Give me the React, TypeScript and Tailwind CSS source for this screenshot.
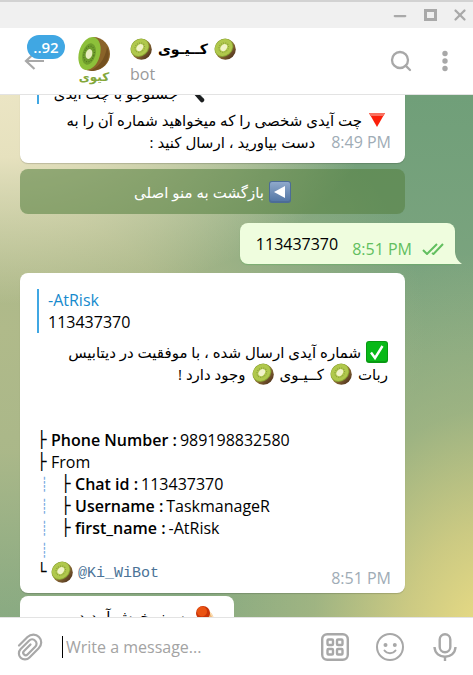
import React from "react";
import { Minus, Search, X } from "lucide-react";

const LATIN = "font-['Open_Sans','DejaVu_Sans',sans-serif]";

function Kiwi({ className = "" }: { className?: string }) {
  return (
    <svg viewBox="0 0 22 22" className={`inline-block w-[22px] h-[22px] shrink-0 ${className}`} aria-hidden="true">
      <defs>
        <linearGradient id="kiwiSkin" x1="0" y1="0" x2="1" y2="1">
          <stop offset="0.45" stopColor="#9a7a3c" />
          <stop offset="1" stopColor="#3d2014" />
        </linearGradient>
      </defs>
      <circle cx="11.4" cy="11.4" r="10.4" fill="url(#kiwiSkin)" />
      <ellipse cx="9.9" cy="9.7" rx="10" ry="8.6" transform="rotate(-42 9.9 9.7)" fill="#87a032" />
      <ellipse cx="9.7" cy="9.5" rx="9.3" ry="7.9" transform="rotate(-42 9.7 9.5)" fill="#b0c84c" />
      <ellipse cx="9.8" cy="9.6" rx="5.2" ry="4.3" transform="rotate(-42 9.8 9.6)" fill="none" stroke="#84993a" strokeWidth="1" strokeDasharray="1 1.2" />
      <ellipse cx="9.8" cy="9.6" rx="3.9" ry="2.9" transform="rotate(-50 9.8 9.6)" fill="#f1f3c8" />
    </svg>
  );
}

function CheckEmoji() {
  return (
    <svg viewBox="0 0 22 22" className="inline-block w-[22px] h-[22px] shrink-0" aria-hidden="true">
      <rect width="22" height="22" rx="3" fill="#079a12" />
      <rect x="1" y="1" width="20" height="19" rx="2" fill="#08b918" />
      <path d="M5 11.5 L9 17 L16.5 5" fill="none" stroke="#fff" strokeWidth="2.4" />
    </svg>
  );
}

function BackEmoji() {
  return (
    <svg viewBox="0 0 22 22" className="inline-block w-[22px] h-[22px] shrink-0" aria-hidden="true">
      <defs>
        <linearGradient id="backKey" x1="0" y1="0" x2="0" y2="1">
          <stop offset="0" stopColor="#8fa9cb" />
          <stop offset="1" stopColor="#5578a6" />
        </linearGradient>
      </defs>
      <rect width="22" height="22" rx="3" fill="#4c6c97" />
      <rect x="1" y="1" width="20" height="19" rx="2" fill="url(#backKey)" />
      <path d="M5 11 L16 5 V17 Z" fill="#fff" />
    </svg>
  );
}

function TriangleEmoji() {
  return (
    <svg viewBox="0 0 22 22" className="inline-block w-[22px] h-[22px] shrink-0" aria-hidden="true">
      <path d="M3 4 H19 L11 18 Z" fill="#fb1f0a" />
      <path d="M3 4 H19 L17.5 7 H4.5 Z" fill="#f9705f" />
    </svg>
  );
}

function BallEmoji() {
  return (
    <svg viewBox="0 0 22 22" className="inline-block w-[22px] h-[22px] shrink-0" aria-hidden="true">
      <path d="M12 4 L17 9 L22 20 L10 15 Z" fill="#f0b878" />
      <path d="M15 7 L22 20 M13 11 L19 19" stroke="#fbe0ba" strokeWidth="1.2" />
      <circle cx="8" cy="8" r="7" fill="#c93408" />
      <circle cx="7" cy="6.5" r="5" fill="#ea5312" />
    </svg>
  );
}

function PenEmoji() {
  return (
    <svg viewBox="0 0 22 22" className="inline-block w-[22px] h-[22px] shrink-0" aria-hidden="true">
      <path d="M9 10 L16 18" stroke="#1c1f20" strokeWidth="4.5" strokeLinecap="round" />
      <path d="M9 8 L17 16" stroke="#6b7476" strokeWidth="1" />
    </svg>
  );
}

function Avatar() {
  return (
    <div className="w-10 pb-1 flex flex-col items-center">
      <svg viewBox="0 0 34 36" className="w-[34px] h-9" aria-hidden="true">
        <path d="M16 1 C26 1 33 9 33 18 C33 27 26 34 16 35 C11 35 8 34 6 32 Z" fill="#8a6329" />
        <path d="M30 11 C33 17 32 25 27 30 C23 34 17 35 12 35 C21 32 28 24 30 11 Z" fill="#74501f" />
        <ellipse cx="12.5" cy="17.5" rx="10.5" ry="17" transform="rotate(16 12.5 17.5)" fill="#8dc03a" />
        <ellipse cx="12" cy="18" rx="6.5" ry="11" transform="rotate(16 12 18)" fill="#6f9d2c" />
        <ellipse cx="12" cy="18" rx="5" ry="8" transform="rotate(16 12 18)" fill="none" stroke="#4d6f1e" strokeWidth="1" strokeDasharray="1 1.5" />
        <ellipse cx="12" cy="18" rx="3.2" ry="5" transform="rotate(16 12 18)" fill="#e8ecc0" />
      </svg>
      <span className="text-xs leading-[10px] font-bold text-[#83a73a]">کیوی</span>
    </div>
  );
}

function Time({ children }: { children: React.ReactNode }) {
  return <time className="-mr-[3px] text-base leading-[22px] text-[#a0acb6] whitespace-nowrap">{children}</time>;
}

function Fa({ children }: { children: React.ReactNode }) {
  return <span dir="rtl" className="text-[15px]">{children}</span>;
}

function Branch({ children }: { children: string }) {
  return <span className="w-[14px] shrink-0 font-['DejaVu_Sans_Mono',monospace] text-base leading-[22px]">{children}</span>;
}

interface Row {
  label?: string;
  value?: string;
  depth: number;
  branch?: boolean;
}

const rows: Row[] = [
  { label: "Phone Number :", value: "989198832580", depth: 0, branch: true },
  { value: "From", depth: 0, branch: true },
  { label: "Chat id :", value: "113437370", depth: 1, branch: true },
  { label: "Username :", value: "TaskmanageR", depth: 1, branch: true },
  { label: "first_name :", value: "-AtRisk", depth: 1, branch: true },
  { depth: 1 },
];

function TreeRow({ row }: { row: Row }) {
  return (
    <div className="flex h-[22px] whitespace-pre">
      {row.depth > 0 && (
        <span className="w-6 pl-[3px] shrink-0 text-[#6fa4e0] font-['DejaVu_Sans_Mono',monospace] text-sm leading-[22px]">┊</span>
      )}
      {row.branch && <Branch>├</Branch>}
      {row.label && <b className="font-semibold mr-[3px]">{row.label}</b>}
      <span>{row.value}</span>
    </div>
  );
}

function TitleBar() {
  return (
    <div className="h-7 shrink-0 bg-[#f0f0f0] border-t-2 border-[#d2d2d2] flex items-center justify-end gap-3 pr-1 text-[#a9a9a9]">
      <button aria-label="Minimize" className="w-[18px] h-5 flex items-end justify-center">
        <Minus className="w-[18px] h-[18px]" strokeWidth={3} />
      </button>
      <button aria-label="Maximize" className="w-[18px] h-5 flex items-center justify-center">
        <span className="w-[13px] h-3 border-[3px] border-[#a9a9a9]" />
      </button>
      <button aria-label="Close" className="w-[18px] h-5 flex items-center justify-center">
        <X className="w-[18px] h-[18px]" strokeWidth={3} />
      </button>
    </div>
  );
}

function Header() {
  return (
    <header className="h-[67px] shrink-0 bg-white border-b border-[#e3e3e3] flex items-center pl-6 pr-[18px]">
      <button aria-label="Back" className="relative w-[41px] h-12 shrink-0 text-[#a8a8a8]">
        <svg viewBox="0 0 20 18" className="absolute left-0 top-[15px] w-5 h-[18px]" fill="none" stroke="currentColor" strokeWidth="2.2">
          <path d="M20 9 H2 M10.5 1 L2 9 L10.5 17" />
        </svg>
        <span className="absolute left-[3px] -top-[2px] h-6 w-[38px] rounded-full bg-[#40a7e3] text-white text-[15px] leading-6 font-semibold text-center">
          ..92
        </span>
      </button>
      <div className="ml-[9px] shrink-0">
        <Avatar />
      </div>
      <div className="ml-4 flex-1 min-w-0">
        <h1 dir="rtl" className="flex justify-end items-center gap-[6px] h-[26px] text-sm font-bold text-black">
          <Kiwi />
          <span>کــیـوی</span>
          <Kiwi />
        </h1>
        <p className="text-base leading-6 text-[#999]">bot</p>
      </div>
      <button aria-label="Search" className="text-[#a8a8a8]">
        <Search className="w-6 h-6" strokeWidth={2.3} />
      </button>
      <button aria-label="More" className="ml-[22px] w-5 h-6 flex items-center justify-center text-[#a8a8a8]">
        <svg viewBox="0 0 6 22" className="w-[6px] h-[22px]" fill="currentColor">
          <circle cx="3" cy="3.5" r="2.7" />
          <circle cx="3" cy="11" r="2.7" />
          <circle cx="3" cy="18.5" r="2.7" />
        </svg>
      </button>
    </header>
  );
}

function Composer() {
  return (
    <footer className="h-[58px] shrink-0 bg-white border-t border-[#e3e3e3] flex items-center pl-4 pr-[14px] text-[#a8a8a8]">
      <button aria-label="Attach" className="shrink-0">
        <svg viewBox="0 0 28 28" className="w-7 h-7" fill="none" stroke="currentColor" strokeWidth="2.2" strokeLinecap="round">
          <path d="M3 12.5 L11.5 4 C15 .7 20 .8 23 4 C26 7 26 12 22.7 15.3 L13.5 24.5 C11 27 7 27 4.7 24.7 C2.3 22.3 2.3 18.5 4.7 16 L13 7.7 C14.8 6 17.5 6 19.2 7.7 C21 9.4 21 12 19.2 13.8 L11.5 21.5 C10.5 22.5 9 22.5 8 21.5 C7 20.5 7 19 8 18 L14.5 11.5" />
        </svg>
      </button>
      <div className="ml-[18px] h-[22px] w-px shrink-0 bg-black" />
      <input
        aria-label="Write a message"
        placeholder="Write a message..."
        className="ml-[3px] flex-1 min-w-0 h-8 bg-transparent outline-none text-base text-black placeholder:text-[#a3a3a3]"
      />
      <div className="flex items-center gap-[27px]">
        <button aria-label="Bot keyboard">
          <svg viewBox="0 0 28 28" className="w-7 h-7" fill="none" stroke="currentColor" strokeWidth="2.4">
            <rect x="1.2" y="1.2" width="25.6" height="25.6" rx="5" />
            <rect x="6.5" y="6.5" width="5.5" height="5.5" rx="1" />
            <rect x="16" y="6.5" width="5.5" height="5.5" rx="1" />
            <rect x="6.5" y="16" width="5.5" height="5.5" rx="1" />
            <rect x="16" y="16" width="5.5" height="5.5" rx="1" />
          </svg>
        </button>
        <button aria-label="Emoji">
          <svg viewBox="0 0 28 28" className="w-7 h-7" fill="none" stroke="currentColor" strokeWidth="2">
            <circle cx="14" cy="14" r="13" />
            <circle cx="9.5" cy="12" r="2" fill="currentColor" stroke="none" />
            <circle cx="18.8" cy="12" r="2" fill="currentColor" stroke="none" />
            <path d="M8.5 17.5 C11 21 17 21 19.5 17.5" strokeLinecap="round" />
          </svg>
        </button>
        <button aria-label="Record voice">
          <svg viewBox="0 0 28 28" className="w-7 h-7" fill="none" stroke="currentColor" strokeWidth="2.4">
            <rect x="8.7" y="1.2" width="10.6" height="18" rx="5.3" />
            <path d="M3.5 14 C4 27 24 27 24.5 14 M14 24 V28.5" />
          </svg>
        </button>
      </div>
    </footer>
  );
}

export default function App() {
  return (
    <div className={`h-screen flex flex-col overflow-hidden text-base leading-[22px] text-black ${LATIN}`}>
      <TitleBar />
      <Header />
      <main className="flex-1 min-h-0 overflow-hidden bg-[radial-gradient(ellipse_65%_75%_at_105%_105%,#efdf84_0%,#ddd283cc_30%,#c5c58466_60%,#c5c58400_100%),radial-gradient(ellipse_80%_40%_at_0%_0%,#ebe5c4_0%,#e6e1be_30%,#e6e1be00_100%),radial-gradient(ellipse_90%_58%_at_0%_45%,#b0ba8a_0%,#b0ba8ae0_40%,#b0ba8a00_100%),linear-gradient(180deg,#709f79_0%,#80a681_50%,#86a981_100%)]">
        <div className="-mt-[13px] flex flex-col">
          <article className="ml-5 mr-[68px] bg-white rounded-b-lg px-[17px] pb-[10px] shadow-[0_1px_1px_#0000002a]">
            <div dir="rtl" className="flex items-center gap-2 h-[22px] border-l-2 border-[#40a7e3] pl-[9px] pr-[180px] whitespace-nowrap">
              <PenEmoji />
              <Fa>جستوجو با چت آیدی</Fa>
            </div>
            <div dir="rtl" className="mt-[5px] flex items-center gap-1 h-[22px] whitespace-nowrap">
              <TriangleEmoji />
              <Fa>چت آیدی شخصی را که میخواهید شماره آن را به</Fa>
            </div>
            <div className="flex items-end justify-end gap-4 h-[22px] whitespace-nowrap">
              <Fa>دست بیاورید ، ارسال کنید :</Fa>
              <Time>8:49 PM</Time>
            </div>
          </article>

          <button className="ml-5 mr-[68px] mt-[6px] h-[45px] rounded-lg bg-[#557f3f90] text-white font-medium flex items-center justify-center gap-[5px]" dir="rtl">
            <BackEmoji />
            <Fa>بازگشت به منو اصلی</Fa>
          </button>

          <article className="relative self-end mr-[18px] mt-[9px] h-[41px] pl-4 pr-[11px] rounded-lg rounded-br-none bg-[#effdde] flex items-center gap-[14px] shadow-[0_1px_1px_#5fae5f80]">
            <span>113437370</span>
            <span className="flex items-center gap-[10px] pt-[10px] text-[#62bf5f]">
              <time>8:51 PM</time>
              <svg viewBox="0 0 22 12" className="w-[22px] h-3" fill="none" stroke="currentColor" strokeWidth="2">
                <path d="M1 7 L5 11 L15 1 M10 10 L11.5 11 L21 1" />
              </svg>
            </span>
            <svg viewBox="0 0 8 12" className="absolute -right-[7px] bottom-0 w-2 h-3" fill="#effdde" aria-hidden="true">
              <path d="M0 0 H1 C1.5 6 4 9 8 12 H0 Z" />
            </svg>
          </article>

          <article className="ml-5 mr-[68px] mt-[9px] bg-white rounded-lg px-[17px] pt-4 pb-[10px] shadow-[0_1px_1px_#0000002a]">
            <blockquote className="border-l-2 border-[#40a7e3] pl-[9px]">
              <a href="#reply" className="block font-medium text-[#168acd]">-AtRisk</a>
              <p>113437370</p>
            </blockquote>
            <div dir="rtl" className="mt-2 h-[88px] whitespace-nowrap">
              <p className="flex items-center gap-[5px] h-[22px]">
                <CheckEmoji />
                <Fa>شماره آیدی ارسال شده ، با موفقیت در دیتابیس</Fa>
              </p>
              <p className="flex items-center gap-[6px] h-[22px]">
                <Fa>ربات</Fa>
                <Kiwi />
                <Fa>کــیـوی</Fa>
                <Kiwi />
                <Fa>وجود دارد !</Fa>
              </p>
            </div>
            {rows.map((row, i) => (
              <TreeRow key={i} row={row} />
            ))}
            <div className="flex items-center h-[22px]">
              <Branch>└</Branch>
              <Kiwi />
              <a href="#bot" className="ml-[5px] pt-1 font-['Liberation_Mono',monospace] text-[15px] text-[#4b7397]">@Ki_WiBot</a>
              <span className="ml-auto pt-3 flex">
                <Time>8:51 PM</Time>
              </span>
            </div>
          </article>

          <article className="self-start ml-5 mt-[3px] w-[214px] h-12 bg-white rounded-lg px-[17px] pt-[9px]">
            <p dir="rtl" className="flex items-center gap-[5px] h-[22px] whitespace-nowrap">
              <BallEmoji />
              <Fa>به منو خوش آمدید</Fa>
            </p>
          </article>
        </div>
      </main>
      <Composer />
    </div>
  );
}
